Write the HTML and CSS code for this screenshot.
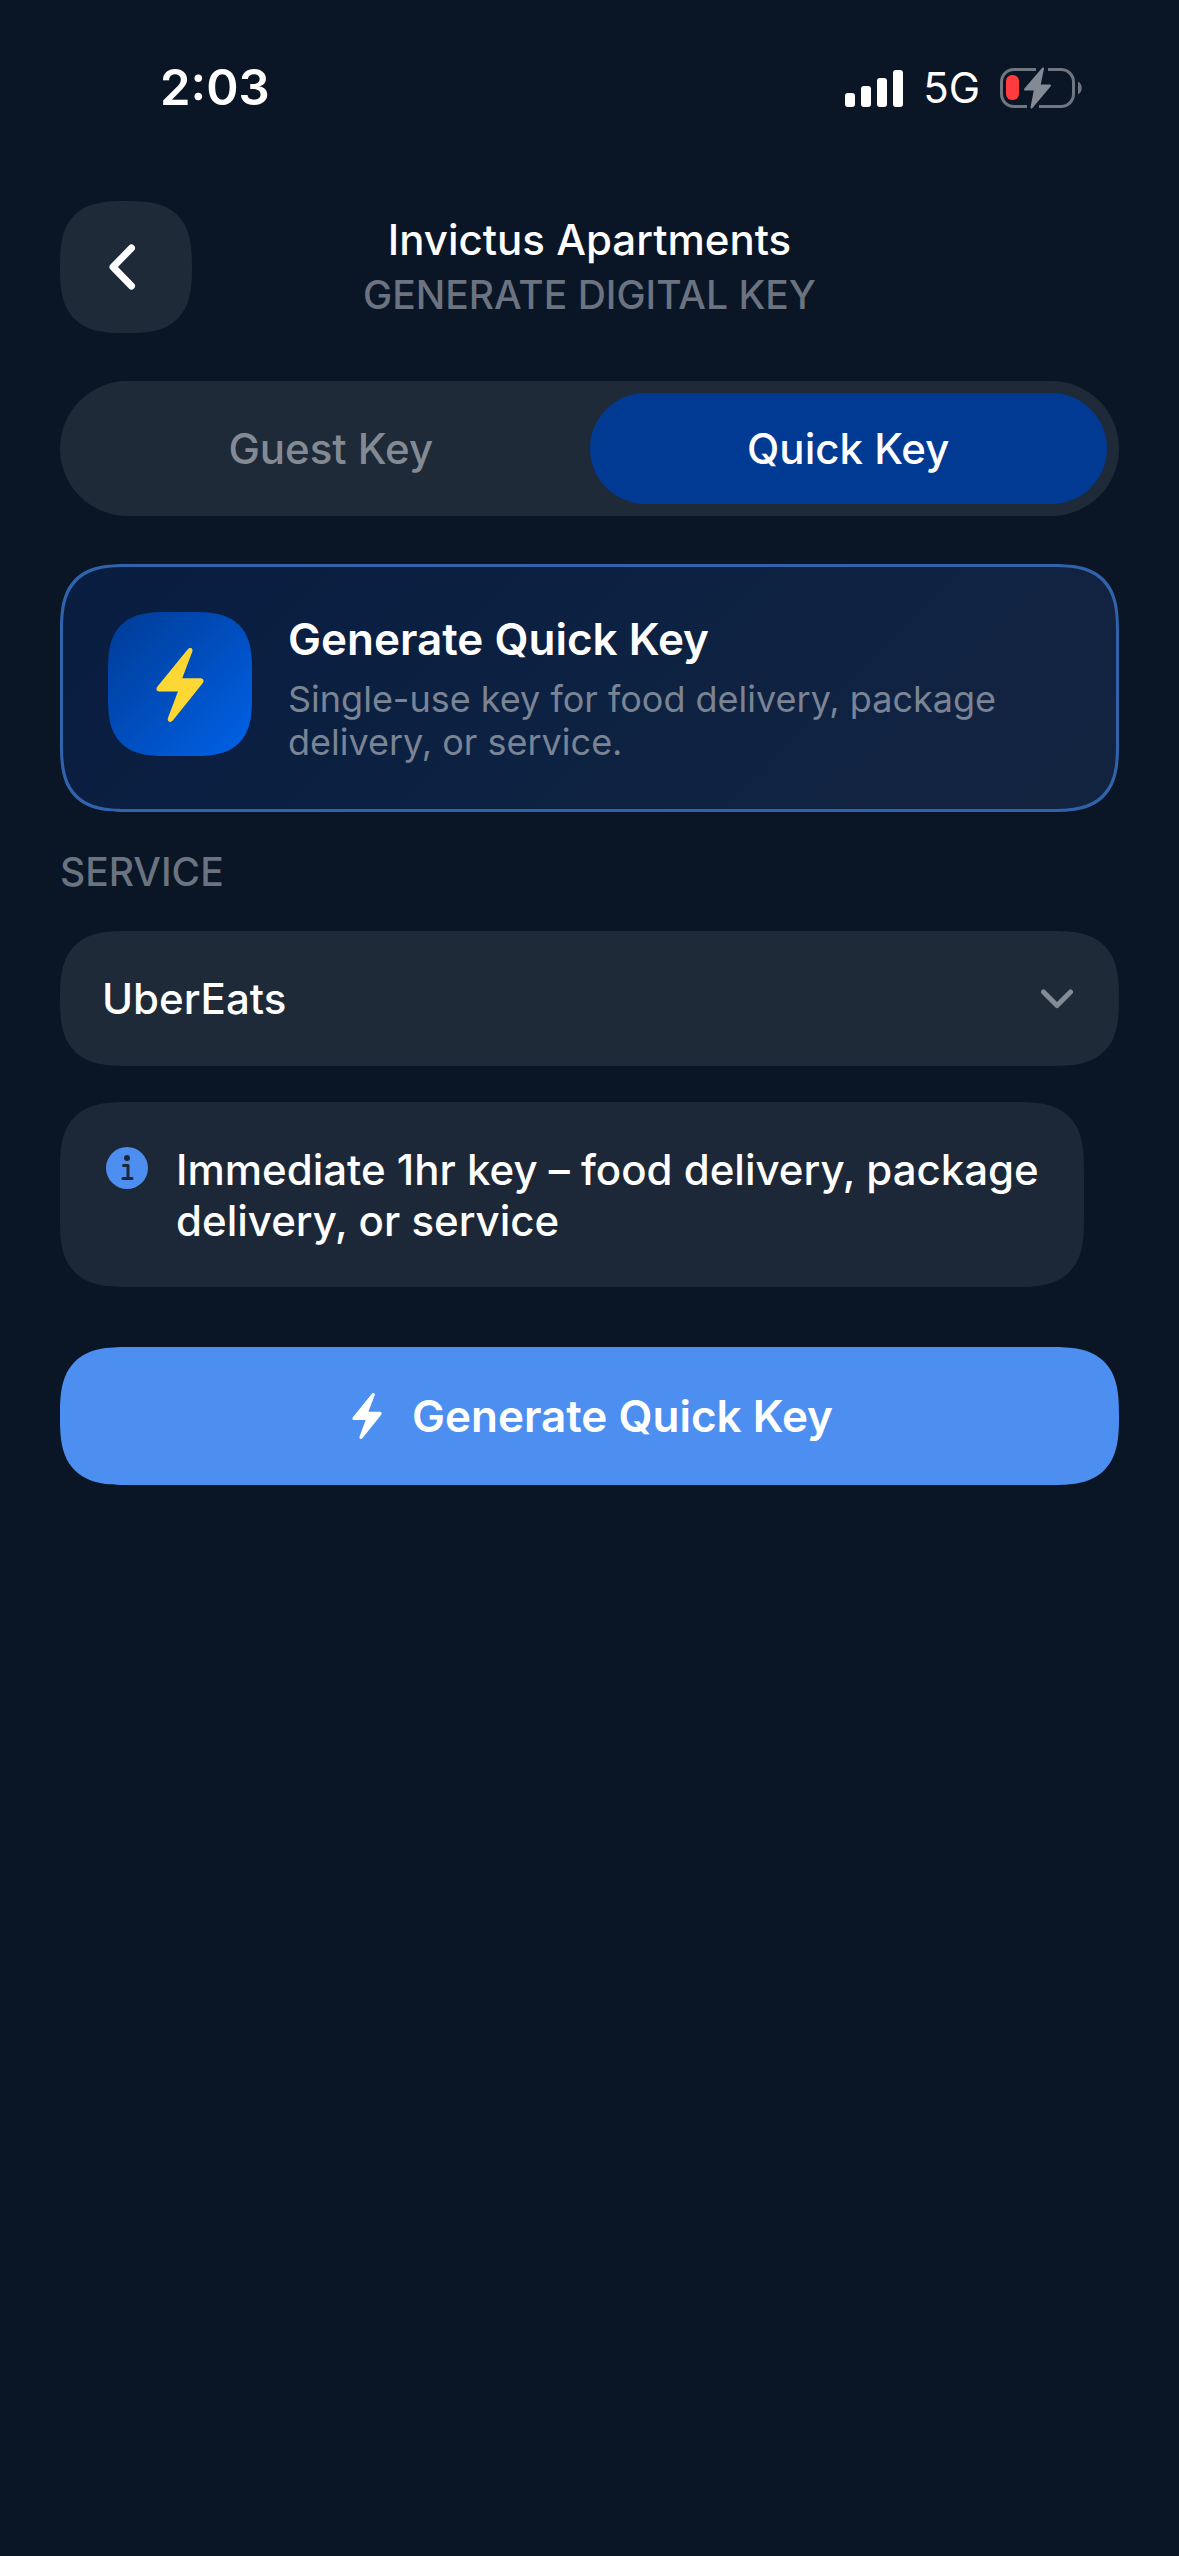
FILE: index.html
```html
<!DOCTYPE html>
<html lang="en">
<head>
    <meta charset="UTF-8">
    <meta name="viewport" content="width=device-width, initial-scale=1.0">
    <title>Generate Digital Key</title>
    <link rel="stylesheet" href="styles.css">
</head>
<body>
    <div class="status-bar">
        <span class="status-time">2:03</span>
        <div class="status-icons">
            <svg class="signal" width="58" height="37" viewBox="0 0 58 37" fill="#fff" aria-hidden="true">
                <rect x="0" y="23" width="10" height="14" rx="3"/>
                <rect x="16" y="16" width="10" height="21" rx="3"/>
                <rect x="32" y="8" width="10" height="29" rx="3"/>
                <rect x="48" y="0" width="10" height="37" rx="3"/>
            </svg>
            <span class="network">5G</span>
            <svg class="battery" width="82" height="42" viewBox="0 0 82 42" aria-hidden="true">
                <path d="M36 2.5H14A12.5 12.5 0 0 0 1.5 15V27A12.5 12.5 0 0 0 14 39.5H27M48 2.5H61A12.5 12.5 0 0 1 73.5 15V27A12.5 12.5 0 0 1 61 39.5H39" fill="none" stroke="#6f7682" stroke-width="3"/>
                <path d="M78 14.5C83 17 83 25 78 27.5Z" fill="#6f7682"/>
                <rect x="6" y="8" width="13" height="25" rx="6" fill="#ff3b3f"/>
                <path d="M43 1.5L25 22.5H35L31.5 40.5L50 18.5H39.5Z" fill="#848a95" stroke="#848a95" stroke-width="2" stroke-linejoin="round"/>
            </svg>
        </div>
    </div>

    <header class="header">
        <button class="back-btn" type="button" aria-label="Back">
            <svg width="28" height="46" viewBox="0 0 28 46" fill="none" stroke="#fff" stroke-width="7" stroke-linecap="round" stroke-linejoin="round" aria-hidden="true">
                <path d="M23.5 4L5 23L23.5 42"/>
            </svg>
        </button>
        <div class="header-text">
            <h1>Invictus Apartments</h1>
            <p>GENERATE DIGITAL KEY</p>
        </div>
    </header>

    <main class="content">
        <div class="tabs">
            <button class="tab" type="button">Guest Key</button>
            <button class="tab active" type="button">Quick Key</button>
        </div>

        <section class="hero">
            <div class="hero-icon">
                <svg width="48" height="74" viewBox="0 0 46 72" aria-hidden="true">
                    <path d="M30.6 1.2L0.9 37.8C-0.7 39.8 0.2 42.4 2.8 42.4H21L11.2 68.4C10.3 71.4 13.6 73.3 15.8 70.9L45.2 34C46.7 32 45.6 29.4 43.2 29.4H25.2L35 3.4C36 0.3 32.8 -1.4 30.6 1.2Z" fill="#fdd835"/>
                </svg>
            </div>
            <div class="hero-text">
                <h2>Generate Quick Key</h2>
                <p>Single-use key for food delivery, package delivery, or service.</p>
            </div>
        </section>

        <form class="key-form">
            <label class="field-label" for="service">SERVICE</label>
            <div class="select-box">
                <select id="service">
                    <option>UberEats</option>
                </select>
                <svg class="chevron" width="32" height="20" viewBox="0 0 32 20" fill="none" stroke="#858b95" stroke-width="5" stroke-linecap="round" stroke-linejoin="round" aria-hidden="true">
                    <path d="M2.5 3L16 16.5L29.5 3"/>
                </svg>
            </div>

            <div class="info">
                <svg class="info-icon" width="42" height="42" viewBox="0 0 42 42" aria-hidden="true">
                    <circle cx="21" cy="21" r="21" fill="#4d8ff0"/>
                    <circle cx="21" cy="11" r="3" fill="#1c2737"/>
                    <path d="M17.5 18.5H22V31.5M17 31.5H26" fill="none" stroke="#1c2737" stroke-width="3" stroke-linecap="round" stroke-linejoin="round"/>
                </svg>
                <p>Immediate 1hr key – food delivery, package delivery, or service</p>
            </div>

            <button class="generate-btn" type="button">
                <svg width="30" height="46" viewBox="0 0 46 72" aria-hidden="true">
                    <path d="M30.6 1.2L0.9 37.8C-0.7 39.8 0.2 42.4 2.8 42.4H21L11.2 68.4C10.3 71.4 13.6 73.3 15.8 70.9L45.2 34C46.7 32 45.6 29.4 43.2 29.4H25.2L35 3.4C36 0.3 32.8 -1.4 30.6 1.2Z" fill="#fff"/>
                </svg>
                Generate Quick Key
            </button>
        </form>
    </main>
</body>
</html>
```
FILE: styles.css
```css
* {
    box-sizing: border-box;
}
body {
    margin: 0;
    padding: 0 60px;
    min-height: 100vh;
    background: #0a1526;
    color: #fff;
    font-family: Inter, "Liberation Sans", sans-serif;
}
h1, h2, p {
    margin: 0;
}
button, select {
    border: none;
    font-family: inherit;
    color: inherit;
    cursor: pointer;
}
svg {
    display: block;
    flex-shrink: 0;
}

/* status bar */
.status-bar {
    display: flex;
    justify-content: space-between;
    align-items: center;
    height: 176px;
    padding: 0 37px 0 100px;
}
.status-time {
    font-size: 49px;
    line-height: 60px;
    font-weight: 600;
}
.status-icons {
    display: flex;
    align-items: center;
    gap: 20px;
}
.network {
    font-size: 42px;
    line-height: 52px;
}

/* header */
.header {
    display: grid;
    grid-template-columns: 132px 1fr 132px;
    align-items: center;
    margin-top: 25px;
}
.back-btn {
    display: flex;
    align-items: center;
    justify-content: center;
    height: 132px;
    padding: 0 8px 0 0;
    border-radius: 48px;
    background: #1e2a38;
}
.header-text {
    text-align: center;
}
.header h1 {
    font-size: 42px;
    line-height: 55px;
    font-weight: 500;
}
.header p {
    font-size: 39px;
    line-height: 55px;
    font-weight: 500;
    color: #6b7280;
}

/* tabs */
.tabs {
    display: flex;
    height: 135px;
    margin-top: 48px;
    padding: 12px;
    border-radius: 68px;
    background: #1e2a38;
}
.tab {
    flex: 1;
    border-radius: 56px;
    background: none;
    color: #848a94;
    font-size: 42px;
    font-weight: 500;
}
.tab.active {
    background: #003a93;
    color: #fff;
}

/* quick key card */
.hero {
    display: flex;
    gap: 36px;
    margin-top: 48px;
    padding: 45px;
    border: 3px solid #3163ad;
    border-radius: 48px;
    background: linear-gradient(135deg, #081d40, #0d2142 50%, #132440);
}
.hero-icon {
    display: flex;
    align-items: center;
    justify-content: center;
    flex-shrink: 0;
    width: 144px;
    height: 144px;
    padding-top: 2px;
    border-radius: 42px;
    background: linear-gradient(135deg, #003b95, #0062e8);
}
.hero h2 {
    font-size: 44px;
    line-height: 54px;
    font-weight: 600;
}
.hero p {
    margin-top: 12px;
    font-size: 36px;
    line-height: 43px;
    color: #7a8494;
}

/* form */
.key-form {
    display: flex;
    flex-direction: column;
}
.field-label {
    margin: 36px 0;
    font-size: 39px;
    line-height: 47px;
    font-weight: 500;
    color: #6b7280;
}
.select-box {
    display: grid;
    align-items: center;
}
.select-box select,
.chevron {
    grid-area: 1 / 1;
}
.select-box select {
    appearance: none;
    width: 100%;
    height: 135px;
    padding: 0 100px 0 42px;
    border-radius: 48px;
    background: #1e2a38;
    font-size: 42px;
    font-weight: 500;
}
.chevron {
    justify-self: end;
    margin-right: 46px;
    pointer-events: none;
}
.info {
    display: flex;
    gap: 28px;
    margin: 36px 35px 0 0;
    padding: 42px 42px 41px 46px;
    border-radius: 48px;
    background: #1c2737;
}
.info-icon {
    margin-top: 3px;
}
.info p {
    font-size: 42px;
    line-height: 51px;
    font-weight: 500;
}
.generate-btn {
    display: flex;
    align-items: center;
    justify-content: center;
    gap: 30px;
    height: 138px;
    margin-top: 60px;
    padding: 0 0 0 6px;
    border-radius: 48px;
    background: #4d8ff0;
    font-size: 44px;
    font-weight: 600;
}

/* smoother corners where the browser can draw them */
@supports (corner-shape: superellipse(1.5)) {
    .back-btn,
    .hero,
    .hero-icon,
    .select-box select,
    .info,
    .generate-btn {
        corner-shape: superellipse(1.5);
        border-radius: 68px;
    }
    .hero-icon {
        border-radius: 60px;
    }
}
```
